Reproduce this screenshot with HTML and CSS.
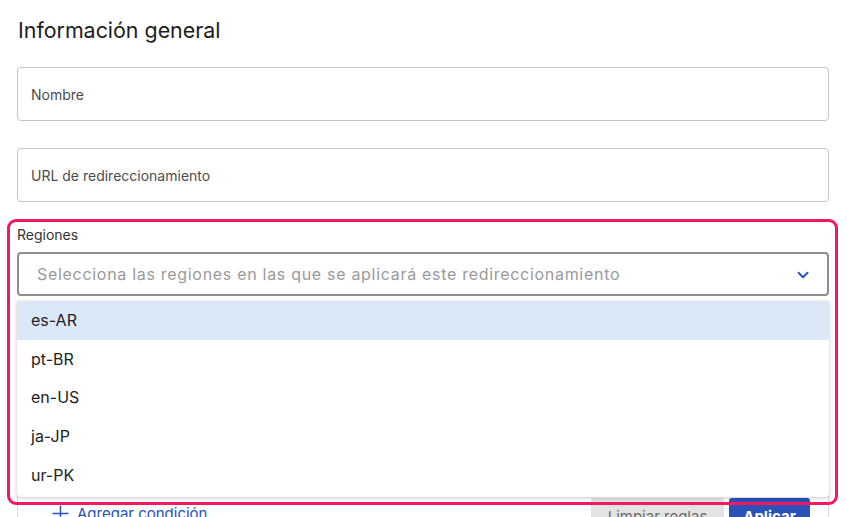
FILE: index.html
```html
<!DOCTYPE html>
<html lang="es">
<head>
<meta charset="utf-8">
<title>Información general</title>
<link rel="stylesheet" href="styles.css">
</head>
<body>
<main class="page">
  <h1 class="title">Información general</h1>
  <div class="input"><span class="placeholder">Nombre</span></div>
  <div class="input"><span class="placeholder">URL de redireccionamiento</span></div>

  <div class="field">
    <div class="highlight"></div>
    <label class="label">Regiones</label>
    <div class="select">
      <span class="select-placeholder">Selecciona las regiones en las que se aplicará este redireccionamiento</span>
      <svg class="chevron" width="12" height="8" viewBox="0 0 12 8"><path d="M1.5 1.8 L6 6.2 L10.5 1.8" fill="none" stroke="#2a55c8" stroke-width="2" stroke-linecap="round" stroke-linejoin="round"/></svg>
    </div>
    <ul class="menu">
      <li class="option active">es-AR</li>
      <li class="option">pt-BR</li>
      <li class="option">en-US</li>
      <li class="option">ja-JP</li>
      <li class="option">ur-PK</li>
    </ul>
  </div>

  <section class="rules">
    <div class="rules-body"></div>
    <div class="rules-footer">
      <a class="add">
        <svg class="plus" width="17" height="17" viewBox="0 0 17 17"><path d="M8.5 0.5 V16.5 M0.5 8.5 H16.5" stroke="#2a52b8" stroke-width="1.5"/></svg>
        <span>Agregar condición</span>
      </a>
      <div class="actions">
        <button class="btn btn-clear">Limpiar reglas</button>
        <button class="btn btn-apply">Aplicar</button>
      </div>
    </div>
  </section>
</main>
</body>
</html>
```

FILE: styles.css
```css
* { box-sizing: border-box; }
html, body { margin: 0; padding: 0; background: #fff; overflow: hidden; }
body { font-family: Inter, "Noto Sans", "Liberation Sans", sans-serif; color: #1f1f1f; }

.page {
  padding: 0 18px 0 17px;
  display: flex;
  flex-direction: column;
}

.title {
  margin: 18px 0 0 1px;
  font-size: 21.4px;
  line-height: 25px;
  font-weight: 400;
  color: #1c1c1c;
}

.input {
  height: 54px;
  border: 1px solid #c4c4c4;
  border-radius: 4px;
  display: flex;
  align-items: center;
  padding-left: 13px;
  margin-top: 24px;
}
.input + .input { margin-top: 27px; }
.placeholder { font-size: 14px; color: #4d4d4d; }

.field {
  position: relative;
  margin-top: 24px;
}
.highlight {
  position: absolute;
  top: -7px;
  left: -10px;
  right: -9px;
  height: 286px;
  border: 3px solid #f5185f;
  border-radius: 9px;
  z-index: 3;
  pointer-events: none;
}
.label {
  display: block;
  font-size: 14px;
  line-height: 17px;
  color: #333;
}
.select {
  margin-top: 9px;
  height: 44px;
  border: 2px solid #8e8e8e;
  border-radius: 4px;
  display: flex;
  align-items: center;
  justify-content: space-between;
  padding: 0 18px 0 18px;
}
.select-placeholder { font-size: 16px; color: #9a9a9a; letter-spacing: 0.7px; }
.chevron { margin-top: 1px; }

.menu {
  position: absolute;
  top: calc(100% + 5px);
  left: 0;
  right: 0;
  margin: 0;
  padding: 0 0 3px;
  list-style: none;
  background: #fff;
  border-radius: 0 0 4px 4px;
  box-shadow: 0 1px 4px rgba(0, 0, 0, 0.22);
  z-index: 2;
}
.option {
  height: 38.6px;
  display: flex;
  align-items: center;
  padding-left: 14px;
  font-size: 16px;
  color: #222;
}
.option.active { background: #dbe8f8; }

.rules {
  margin-top: 20px;
  border: 1px solid #d9d9d9;
  border-radius: 4px;
  padding: 16px 18px 0 34px;
}
.rules-body { height: 165px; }
.rules-footer {
  display: flex;
  justify-content: space-between;
  align-items: flex-start;
}
.add {
  display: flex;
  align-items: center;
  gap: 8px;
  margin-top: 6px;
  color: #2a52b8;
  font-size: 15px;
}
.actions { display: flex; gap: 5px; }
.btn {
  font-family: inherit;
  font-size: 15px;
  border: none;
  border-radius: 3px;
  height: 36px;
  padding: 0 14px;
}
.btn-clear { background: #e3e3e3; color: #6b6b6b; width: 133px; }
.btn-apply { background: #2a52b8; color: #fff; font-weight: 700; width: 81px; }
```
